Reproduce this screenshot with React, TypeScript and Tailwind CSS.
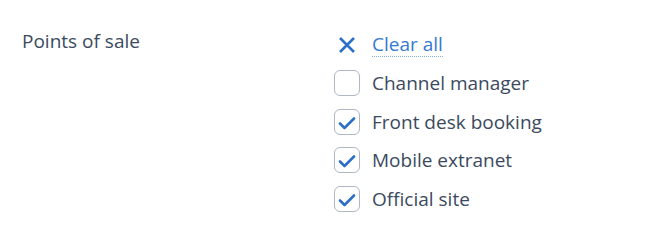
import { useState } from "react";

const options = [
  { id: "channel", label: "Channel manager", checked: false },
  { id: "frontdesk", label: "Front desk booking", checked: true },
  { id: "mobile", label: "Mobile extranet", checked: true },
  { id: "site", label: "Official site", checked: true },
];

export default function App() {
  const [items, setItems] = useState(options);

  const toggle = (id: string) =>
    setItems((prev) =>
      prev.map((item) => (item.id === id ? { ...item, checked: !item.checked } : item))
    );

  return (
    <div className="flex w-[650px] h-[240px] bg-white pt-[28px] pl-[22px] font-['Open_Sans',sans-serif] text-[19px] text-[#3b4a5e]">
      {/* label */}
      <div className="w-[312px] leading-[26px]">Points of sale</div>

      {/* options */}
      <div className="flex flex-col mt-[4px]">
        <button
          onClick={() => setItems((prev) => prev.map((i) => ({ ...i, checked: false })))}
          className="flex items-center h-[26px] gap-3 text-left"
        >
          <span className="flex w-[26px] h-[26px] items-center justify-center">
            <svg width="20" height="20" viewBox="0 0 20 20" fill="none">
              <path d="M3 3L17 17M17 3L3 17" stroke="#2d6fc7" strokeWidth="2.6" />
            </svg>
          </span>
          <span className="inline-block text-[#3579d2] leading-[23px] border-b border-dotted border-[#86ade0]">
            Clear all
          </span>
        </button>

        <div className="flex flex-col gap-[12.5px] mt-[12px]">
          {items.map((item) => (
            <label key={item.id} className="flex items-center gap-3 h-[26px] cursor-pointer">
              <input
                type="checkbox"
                className="hidden"
                checked={item.checked}
                onChange={() => toggle(item.id)}
              />
              <span className="flex w-[26px] h-[26px] items-center justify-center rounded-[6px] border border-[#aeb7c3] bg-white">
                {item.checked && (
                  <svg width="20" height="20" viewBox="0 0 20 20" fill="none">
                    <path
                      d="M3 11.5L7.5 16L17 6.5"
                      stroke="#2d6fc7"
                      strokeWidth="2.6"
                      strokeLinecap="round"
                      strokeLinejoin="round"
                    />
                  </svg>
                )}
              </span>
              <span className="leading-[26px]">{item.label}</span>
            </label>
          ))}
        </div>
      </div>
    </div>
  );
}
